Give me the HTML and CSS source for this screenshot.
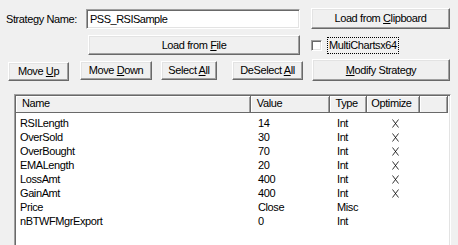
FILE: index.html
```html
<!DOCTYPE html>
<html lang="en">
<head>
    <meta charset="UTF-8">
    <title>Strategy Parameters</title>
    <link rel="stylesheet" href="styles.css">
</head>
<body>
    <div class="dialog">
        <div class="row row-name">
            <label class="name-label" for="strategy">Strategy Name:</label>
            <input class="name-input" id="strategy" type="text" value="PSS_RSISample">
            <button class="btn btn-clip">Load from <u>C</u>lipboard</button>
        </div>
        <div class="row row-file">
            <button class="btn btn-file">Load from <u>F</u>ile</button>
            <label class="check">
                <span class="check-box"></span>
                <span class="check-text">MultiChartsx64</span>
            </label>
        </div>
        <div class="row row-actions">
            <button class="btn btn-up">Move <u>U</u>p</button>
            <button class="btn btn-down">Move <u>D</u>own</button>
            <button class="btn btn-sel">Select <u>A</u>ll</button>
            <button class="btn btn-desel">DeSelect <u>A</u>ll</button>
            <button class="btn btn-modify"><u>M</u>odify Strategy</button>
        </div>
        <div class="list">
            <div class="list-head">
                <div class="col c-name">Name</div>
                <div class="col c-value">Value</div>
                <div class="col c-type">Type</div>
                <div class="col c-opt">Optimize</div>
                <div class="col c-fill"></div>
            </div>
            <div class="list-body">
                <div class="item"><span class="c-name">RSILength</span><span class="c-value">14</span><span class="c-type">Int</span><span class="c-opt"><svg class="mark" viewBox="0 0 7 9"><path d="M0.5 0.5L6.5 8.5M6.5 0.5L0.5 8.5"/></svg></span></div>
                <div class="item"><span class="c-name">OverSold</span><span class="c-value">30</span><span class="c-type">Int</span><span class="c-opt"><svg class="mark" viewBox="0 0 7 9"><path d="M0.5 0.5L6.5 8.5M6.5 0.5L0.5 8.5"/></svg></span></div>
                <div class="item"><span class="c-name">OverBought</span><span class="c-value">70</span><span class="c-type">Int</span><span class="c-opt"><svg class="mark" viewBox="0 0 7 9"><path d="M0.5 0.5L6.5 8.5M6.5 0.5L0.5 8.5"/></svg></span></div>
                <div class="item"><span class="c-name">EMALength</span><span class="c-value">20</span><span class="c-type">Int</span><span class="c-opt"><svg class="mark" viewBox="0 0 7 9"><path d="M0.5 0.5L6.5 8.5M6.5 0.5L0.5 8.5"/></svg></span></div>
                <div class="item"><span class="c-name">LossAmt</span><span class="c-value">400</span><span class="c-type">Int</span><span class="c-opt"><svg class="mark" viewBox="0 0 7 9"><path d="M0.5 0.5L6.5 8.5M6.5 0.5L0.5 8.5"/></svg></span></div>
                <div class="item"><span class="c-name">GainAmt</span><span class="c-value">400</span><span class="c-type">Int</span><span class="c-opt"><svg class="mark" viewBox="0 0 7 9"><path d="M0.5 0.5L6.5 8.5M6.5 0.5L0.5 8.5"/></svg></span></div>
                <div class="item"><span class="c-name">Price</span><span class="c-value">Close</span><span class="c-type">Misc</span><span class="c-opt"></span></div>
                <div class="item"><span class="c-name">nBTWFMgrExport</span><span class="c-value">0</span><span class="c-type">Int</span><span class="c-opt"></span></div>
            </div>
        </div>
    </div>
</body>
</html>
```

FILE: styles.css
```css
body {
    margin: 0;
    padding: 0;
    background: #f0f0f0;
    font-family: "Liberation Sans", Arial, sans-serif;
    font-size: 11px;
    letter-spacing: -0.4px;
    color: #000;
    overflow: hidden;
}
.dialog {
    width: 458px;
    height: 245px;
    padding-top: 8px;
    box-sizing: border-box;
}
.row {
    display: flex;
    align-items: center;
}
.btn {
    font-family: inherit;
    font-size: 11px;
    letter-spacing: -0.4px;
    color: #000;
    background: #f0f0f0;
    border: 1px solid;
    border-color: #fff #696969 #696969 #fff;
    box-shadow: inset -1px -1px #a0a0a0, inset 1px 1px #e3e3e3;
    padding: 0;
    margin: 0;
    height: 21px;
    line-height: 17px;
}
.name-label {
    width: 86px;
    padding-left: 6px;
    box-sizing: border-box;
    white-space: nowrap;
}
.name-input {
    width: 214px;
    height: 20px;
    box-sizing: border-box;
    margin: 0;
    padding: 1px 3px 0;
    font-family: inherit;
    font-size: 11px;
    letter-spacing: -0.5px;
    border: 1px solid;
    border-color: #a0a0a0 #fff #fff #a0a0a0;
    box-shadow: inset 1px 1px #696969, inset -1px -1px #e3e3e3;
    background: #fff;
    outline: none;
}
.btn-clip {
    width: 139px;
    margin-left: 11px;
}
.row-file {
    margin-top: 6px;
}
.btn-file {
    width: 212px;
    height: 20px;
    margin-left: 88px;
}
.check {
    display: flex;
    align-items: center;
    margin-left: 11px;
}
.check-box {
    width: 11px;
    height: 11px;
    box-sizing: border-box;
    background: #fff;
    border: 1px solid;
    border-color: #a0a0a0 #fff #fff #a0a0a0;
    box-shadow: inset 1px 1px #696969, inset -1px -1px #e3e3e3;
}
.check-text {
    margin-left: 6px;
    padding: 1px 1px;
    line-height: 13px;
    outline: 1px dotted #000;
}
.row-actions {
    margin-top: 4px;
    padding-left: 8px;
}
.btn-up {
    width: 61px;
    height: 19px;
    margin-top: 2px;
}
.btn-down {
    width: 72px;
    height: 19px;
    margin-left: 11px;
}
.btn-sel {
    width: 56px;
    height: 19px;
    margin-left: 9px;
}
.btn-desel {
    width: 71px;
    height: 19px;
    margin-left: 15px;
}
.btn-modify {
    width: 138px;
    height: 22px;
    margin-left: 9px;
}
.list {
    margin: 13px 0 0 14px;
    width: 437px;
    height: 160px;
    box-sizing: border-box;
    background: #fff;
    border: 1px solid;
    border-color: #a0a0a0 #fff #fff #a0a0a0;
    box-shadow: inset 1px 1px #696969, inset -1px -1px #e3e3e3;
    padding: 1px 2px 0 1px;
}
.list-head {
    display: flex;
    height: 17px;
    background: #f0f0f0;
}
.col {
    box-sizing: border-box;
    height: 17px;
    line-height: 15px;
    padding-left: 6px;
    border-right: 1px solid #696969;
    box-shadow: inset 1px 1px #fff, inset -1px 0 #a0a0a0;
    border-bottom: 1px solid #696969;
}
.list-head .c-name { width: 236px; }
.list-head .c-value { width: 79px; }
.list-head .c-type { width: 38px; }
.list-head .c-opt { width: 53px; padding-left: 4px; }
.list-head .c-fill { width: 28px; }
.list-body {
    padding-top: 3px;
}
.item {
    display: flex;
    height: 14px;
    line-height: 14px;
    white-space: nowrap;
}
.item span {
    display: block;
    box-sizing: border-box;
}
.item .c-name { width: 236px; padding-left: 4px; }
.item .c-value { width: 79px; padding-left: 6px; }
.item .c-type { width: 38px; padding-left: 6px; }
.item .c-opt {
    width: 53px;
    display: flex;
    justify-content: center;
    align-items: center;
}
.mark {
    width: 7px;
    height: 9px;
    fill: none;
    stroke: #000;
    stroke-width: 0.8;
}
```
